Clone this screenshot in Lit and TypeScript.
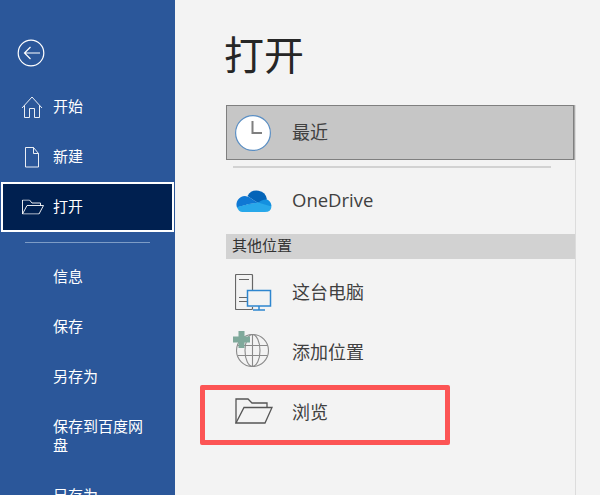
import { LitElement, html, css, svg } from "lit";
import { customElement } from "lit/decorators.js";

const homeIcon = svg`<path d="M1 12 11 1l10 11M3.500 9.500V21.500h5V12.500h5v9h5V9.500" fill="none" stroke="#fff" stroke-width="1" opacity=".9"/>`;
const newIcon = svg`<path d="M4.500 1.500h8l5 6v13.500h-13zM12.500 1.500v6h5" fill="none" stroke="#fff" stroke-width="1" opacity=".9"/>`;
const openIcon = svg`<path d="M.5 14.500V.5h7l2.500 3h8.500v2.500M.5 14.500 5 6h16.500l-4.500 8.500z" fill="none" stroke="#fff" stroke-width="1" opacity=".9"/>`;

@customElement("app-root")
export class AppRoot extends LitElement {
  static styles = css`
    :host {
      display: flex;
      width: 600px;
      height: 495px;
      overflow: hidden;
      position: relative;
      background: #f3f3f3;
      font-family: "Noto Sans CJK SC", "Open Sans", sans-serif;
      color: #333;
    }
    .side {
      width: 175px;
      flex: none;
      background: #2b579a;
      color: #fff;
      font-size: 15px;
      box-sizing: border-box;
      padding-top: 39px;
    }
    .back {
      display: block;
      margin: 0 0 15px 17px;
    }
    .item {
      height: 50px;
      display: flex;
      align-items: center;
      box-sizing: border-box;
      padding-left: 53px;
      padding-bottom: 3px;
      position: relative;
      line-height: 19px;
    }
    .item svg {
      position: absolute;
      left: 21px;
      top: 50%;
      transform: translateY(-50%);
    }
    .item.active {
      background: #002050;
      border: 2px solid #fff;
      margin: 0 1px;
      padding-left: 50px;
    }
    .item.active svg {
      left: 19px;
    }
    .rule {
      height: 1px;
      background: #7d9cc6;
      margin: 10px 25px 9px;
    }
    .item.tall {
      height: 69px;
      padding-right: 28px;
    }
    .main {
      flex: 1;
      padding: 0 24px 0 51px;
      min-width: 0;
    }
    h1 {
      margin: 0 0 0 -2px;
      height: 105px;
      box-sizing: border-box;
      padding-top: 28px;
      font-size: 40px;
      line-height: 50px;
      font-weight: 400;
      color: #262626;
    }
    .list {
      height: 390px;
      border-right: 1px solid #dcdcdc;
    }
    .row {
      display: flex;
      align-items: center;
      height: 60px;
      font-size: 18px;
      color: #404040;
    }
    .label {
      padding-bottom: 3px;
    }
    .icon {
      width: 66px;
      flex: none;
      display: flex;
      box-sizing: border-box;
      padding-left: 9px;
    }
    .row.recent {
      height: 55px;
      background: #c6c6c6;
      border: 1px solid #7f7f7f;
      box-shadow: 1px 0 0 #a8a8a8;
      box-sizing: border-box;
      margin-right: 1px;
    }
    .row.recent .icon {
      width: 65px;
      padding-left: 8px;
    }
    .sep {
      height: 2px;
      background: #d2d2d2;
      margin: 6px 24px 0 7px;
    }
    .row.cloud {
      height: 66px;
    }
    .icon.cloud-icon {
      padding-bottom: 2px;
    }
    .latin {
      font-family: "Open Sans", sans-serif;
      font-size: 18.500px;
      padding-bottom: 4px;
    }
    .group {
      height: 25px;
      background: #d2d2d2;
      font-size: 15px;
      line-height: 22px;
      padding-left: 6px;
      margin-bottom: 3px;
      color: #333;
    }
    .icon.globe {
      padding: 0 0 6px 7px;
    }
    .icon.folder {
      padding-bottom: 3px;
    }
    .mark {
      position: absolute;
      left: 200px;
      top: 385px;
      width: 250px;
      height: 60px;
      box-sizing: border-box;
      border: 5px solid #fc5454;
      border-radius: 2px;
    }
  `;

  render() {
    return html`
      <nav class="side">
        <svg class="back" width="28" height="28" viewBox="0 0 28 28" fill="none" stroke="#fff">
          <circle cx="14" cy="14" r="12.800" stroke-width="1.200" />
          <path d="M7.500 14h15.500M13.500 8 7.500 14l6 6" stroke-width="1.200" />
        </svg>
        <div class="item"><svg width="22" height="22" viewBox="0 0 22 22">${homeIcon}</svg>开始</div>
        <div class="item"><svg width="22" height="22" viewBox="0 0 22 22">${newIcon}</svg>新建</div>
        <div class="item active"><svg width="22" height="15" viewBox="0 0 22 15">${openIcon}</svg>打开</div>
        <div class="rule"></div>
        <div class="item">信息</div>
        <div class="item">保存</div>
        <div class="item">另存为</div>
        <div class="item tall">保存到百度网盘</div>
        <div class="item">另存为</div>
      </nav>
      <main class="main">
        <h1>打开</h1>
        <div class="list">
          <div class="row recent">
            <span class="icon">
              <svg width="36" height="36" viewBox="0 0 36 36">
                <circle cx="18" cy="18" r="17.400" fill="#fff" stroke="#5b8fc4" stroke-width="1.200" />
                <path d="M17.500 6v12H27" fill="none" stroke="#7f7f7f" stroke-width="2" />
              </svg>
            </span>
            <span class="label">最近</span>
          </div>
          <div class="sep"></div>
          <div class="row cloud">
            <span class="icon cloud-icon">
              <svg width="37" height="24" viewBox="0 0 37 24">
                <path d="M12.500 8 23 15l9-3.500A10.500 10.500 0 0 0 12.500 8z" fill="#0364b8" />
                <path d="M14 9 10 8A8.500 8.500 0 0 0 2 19.500L14 16l9-1z" fill="#0f78d4" />
                <path d="M32 11.500q-5-.5-9 3.500L14 16 2 19.500 8 23h23l5.500-5q-.5-5-4.500-6.500z" fill="#1490df" />
                <path d="M2 19 23 14.500l13.500 4Q36 24 30 24H7.500Q3.500 24 2 19z" fill="#28a8ea" />
              </svg>
            </span>
            <span class="latin">OneDrive</span>
          </div>
          <div class="group">其他位置</div>
          <div class="row">
            <span class="icon">
              <svg width="37" height="37" viewBox="0 0 37 37" fill="none">
                <path d="M17.500 16V1.500q0-1-1-1H1.500q-1 0-1 1v33q0 1 1 1h15q1 0 1-1V33" stroke="#666" stroke-width="1.200" />
                <path d="M4 5.500h10M4 23.500h8M4 27.500h8" stroke="#666" stroke-width="1.200" />
                <rect x="12.500" y="16.500" width="23" height="15.500" fill="#f3f3f3" stroke="#2e86cf" stroke-width="1.500" />
                <path d="M24 32v4M18 36h12" stroke="#2e86cf" stroke-width="1.500" />
              </svg>
            </span>
            <span class="label">这台电脑</span>
          </div>
          <div class="row">
            <span class="icon globe">
              <svg width="37" height="37" viewBox="0 0 37 37" fill="none">
                <circle cx="19.500" cy="19.500" r="16" stroke="#8a8a8a" stroke-width="1.100" />
                <ellipse cx="19.500" cy="19.500" rx="7.500" ry="16" stroke="#8a8a8a" stroke-width="1.100" />
                <path d="M19.500 3.500v32M5 14.500h29M5 24.500h29" stroke="#8a8a8a" stroke-width="1.100" />
                <path d="M5.500 0h6v5.500H17v6h-5.500V17h-6v-5.500H0v-6h5.500z" fill="#7fa99b" />
              </svg>
            </span>
            <span class="label">添加位置</span>
          </div>
          <div class="row">
            <span class="icon folder">
              <svg width="38" height="26" viewBox="0 0 38 26" fill="none" stroke="#555" stroke-width="1.300">
                <path d="M1 25V1h12l4 4h15v4.500" />
                <path d="M1 25 9 9.500h28L30 25z" />
              </svg>
            </span>
            <span class="label">浏览</span>
          </div>
        </div>
      </main>
      <div class="mark"></div>
    `;
  }
}
